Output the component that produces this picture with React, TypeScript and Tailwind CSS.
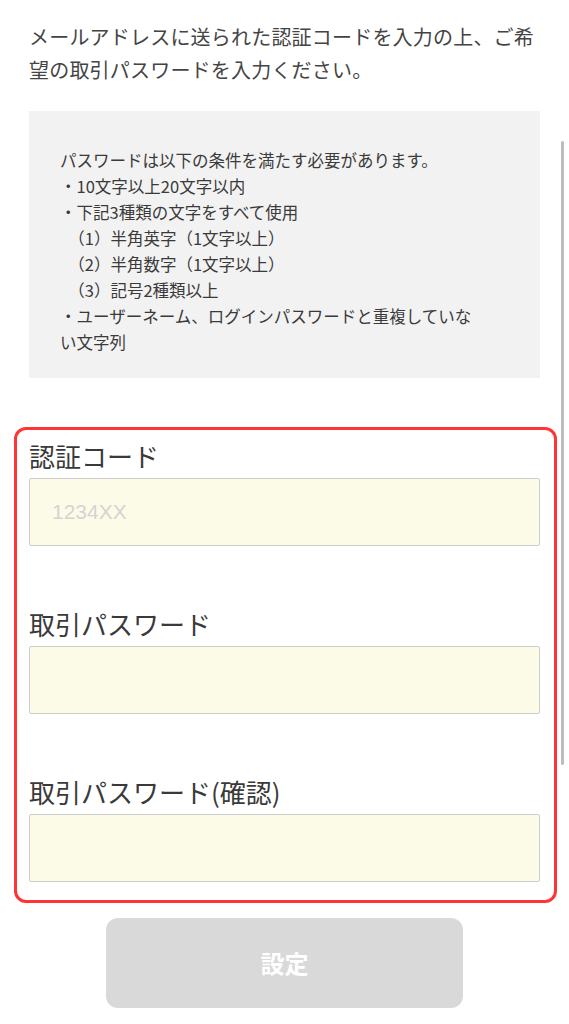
import React from "react";

const font = { fontFamily: '"Noto Sans CJK JP", "Noto Sans", sans-serif' };
const digitFont = { fontFamily: '"Liberation Sans", "Noto Sans CJK JP", sans-serif' };

const rules = [
  "パスワードは以下の条件を満たす必要があります。",
  "・10文字以上20文字以内",
  "・下記3種類の文字をすべて使用",
  "　（1）半角英字（1文字以上）",
  "　（2）半角数字（1文字以上）",
  "　（3）記号2種類以上",
  "・ユーザーネーム、ログインパスワードと重複していな",
  "い文字列",
];

const Field: React.FC<{ label: string; placeholder?: string; type?: string }> = ({
  label,
  placeholder,
  type = "text",
}) => (
  <div>
    <label className="block text-[26px] leading-[32px] text-[#3a3a3a] mb-[6px]">{label}</label>
    <input
      type={type}
      placeholder={placeholder}
      className="block w-full h-[68px] bg-[#fcfbe7] border border-[#cdcdcd] rounded-[2px] px-[22px] text-[21px] text-[#333] placeholder:text-[#d4d4d4] outline-none"
      style={digitFont}
    />
  </div>
);

export default function App() {
  return (
    <div className="relative w-[569px] min-h-[1024px] bg-white" style={font}>
      <div className="px-[29px] pt-[20px]">
        <p className="text-[20px] leading-[33px] text-[#444] tracking-[0.2px]">
          メールアドレスに送られた認証コードを入力の上、ご希
          <br />
          望の取引パスワードを入力ください。
        </p>

        <div className="mt-[25px] bg-[#f2f2f2] pl-[31px] pt-[36px] pb-[23px]">
          {rules.map((line) => (
            <div key={line} className="text-[16.5px] leading-[26px] text-[#3a3a3a] whitespace-nowrap">
              {line}
            </div>
          ))}
        </div>
      </div>

      <div className="ml-[14px] mt-[49px] w-[543px] border-[3px] border-[#ff3535] rounded-[12px] pl-[12px] pr-[14px] pt-[10px] pb-[18px] flex flex-col gap-[62px]">
        <Field label="認証コード" placeholder="1234XX" />
        <Field label="取引パスワード" type="password" />
        <Field label="取引パスワード(確認)" type="password" />
      </div>

      <div className="flex justify-center pt-[15px]">
        <button
          disabled
          className="w-[357px] h-[90px] rounded-[12px] bg-[#d9d9d9] text-white text-[24px] font-bold"
          style={font}
        >
          設定
        </button>
      </div>

      {/* scroll indicator */}
      <div className="absolute left-[561px] top-[141px] w-[3px] h-[624px] rounded-full bg-[#bdbdbd]" />
    </div>
  );
}
